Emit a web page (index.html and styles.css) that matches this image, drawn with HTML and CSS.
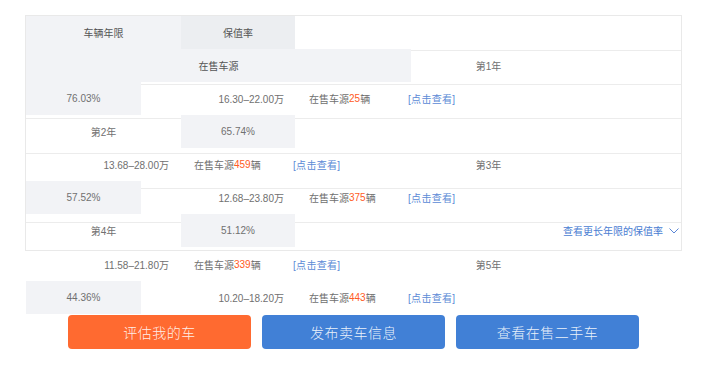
FILE: index.html
```html
<!DOCTYPE html>
<html lang="zh-CN">
<head>
<meta charset="utf-8">
<title>保值率</title>
<link rel="stylesheet" href="styles.css">
</head>
<body>
<div class="page">
  <div class="table">
    <div class="row">
      <div class="cell c-year bg-grey head">车辆年限</div>
      <div class="cell c-rate bg-dark head">保值率</div>
    </div>
    <div class="row">
      <div class="cell c-wide bg-grey head">在售车源</div>
      <div class="cell c-year">第1年</div>
    </div>
    <div class="row">
      <div class="cell c-pct bg-grey">76.03%</div>
      <div class="cell c-price">16.30–22.00万</div>
      <div class="cell c-sale">在售车源<em>25</em>辆</div>
      <div class="cell c-link"><a>[点击查看]</a></div>
    </div>
    <div class="row">
      <div class="cell c-year">第2年</div>
      <div class="cell c-rate bg-grey">65.74%</div>
    </div>
    <div class="row">
      <div class="cell c-price">13.68–28.00万</div>
      <div class="cell c-sale">在售车源<em>459</em>辆</div>
      <div class="cell c-link"><a>[点击查看]</a></div>
      <div class="cell c-year">第3年</div>
    </div>
    <div class="row">
      <div class="cell c-pct bg-grey">57.52%</div>
      <div class="cell c-price">12.68–23.80万</div>
      <div class="cell c-sale">在售车源<em>375</em>辆</div>
      <div class="cell c-link"><a>[点击查看]</a></div>
    </div>
    <div class="row">
      <div class="cell c-year">第4年</div>
      <div class="cell c-rate bg-grey">51.12%</div>
      <div class="cell c-more"><a>查看更长年限的保值率</a><svg class="chev" width="10" height="6" viewBox="0 0 10 6"><polyline points="0.5,0.5 5,5 9.5,0.5" fill="none" stroke="#5a86d6" stroke-width="1"/></svg></div>
    </div>
  </div>
  <div class="row outside first">
    <div class="cell c-price">11.58–21.80万</div>
    <div class="cell c-sale">在售车源<em>339</em>辆</div>
    <div class="cell c-link"><a>[点击查看]</a></div>
    <div class="cell c-year">第5年</div>
  </div>
  <div class="row outside">
    <div class="cell c-pct bg-grey">44.36%</div>
    <div class="cell c-price">10.20–18.20万</div>
    <div class="cell c-sale">在售车源<em>443</em>辆</div>
    <div class="cell c-link"><a>[点击查看]</a></div>
  </div>
  <div class="actions">
    <a class="btn btn-orange">评估我的车</a>
    <a class="btn btn-blue">发布卖车信息</a>
    <a class="btn btn-blue">查看在售二手车</a>
  </div>
</div>
</body>
</html>
```

FILE: styles.css
```css
html, body {
  margin: 0;
  padding: 0;
  background: #fff;
}
body {
  font-family: "Liberation Sans", "Noto Sans CJK SC", sans-serif;
  font-size: 10px;
  color: #707070;
}
.page {
  padding: 15px 0 0 25px;
}
.table {
  width: 655px;
  border: 1px solid #e9e9e9;
  padding-bottom: 3px;
  background-color: #fff;
  background-image:
    linear-gradient(#ececec, #ececec),
    linear-gradient(#ececec, #ececec),
    linear-gradient(#ececec, #ececec),
    linear-gradient(#ececec, #ececec),
    linear-gradient(#ececec, #ececec),
    linear-gradient(#ececec, #ececec);
  background-repeat: no-repeat;
  background-size: 100% 1px;
  background-position: 0 34px, 0 68px, 0 102px, 0 137px, 0 172px, 0 206px;
}
.row {
  display: flex;
  height: 33px;
}
.outside {
  margin-left: 1px;
}
.outside.first {
  margin-top: -3px;
}
.cell {
  display: flex;
  align-items: center;
  height: 33px;
  box-sizing: border-box;
  white-space: nowrap;
}
.head {
  color: #555;
}
.bg-grey {
  background: #f2f3f6;
}
.bg-dark {
  background: #eceef1;
}
.c-year {
  width: 155px;
  justify-content: center;
}
.c-rate {
  width: 114px;
  justify-content: center;
}
.c-wide {
  width: 385px;
  justify-content: center;
}
.c-pct {
  width: 115px;
  justify-content: center;
}
.c-price {
  width: 155px;
  justify-content: flex-end;
  padding-right: 12px;
}
.c-sale {
  width: 100px;
  padding-left: 13px;
}
.c-sale em {
  font-style: normal;
  color: #ff5b24;
}
.c-link {
  width: 130px;
  padding-left: 12px;
}
.c-link a {
  color: #5b8ad6;
  letter-spacing: 0.3px;
}
.c-more {
  flex: 1;
  justify-content: flex-end;
  padding-right: 2px;
}
.c-more a {
  color: #4a7dd2;
}
.chev {
  margin-left: 6px;
  display: block;
}
.actions {
  display: flex;
  gap: 11px;
  margin: 1px 0 0 43px;
}
.btn {
  width: 183px;
  height: 34px;
  border-radius: 4px;
  display: flex;
  align-items: center;
  justify-content: center;
  font-size: 14px;
  font-weight: 300;
  color: rgba(255, 255, 255, 0.9);
  letter-spacing: 0.5px;
}
.btn-orange {
  background: #ff6a30;
}
.btn-blue {
  background: #4180d6;
}
```
